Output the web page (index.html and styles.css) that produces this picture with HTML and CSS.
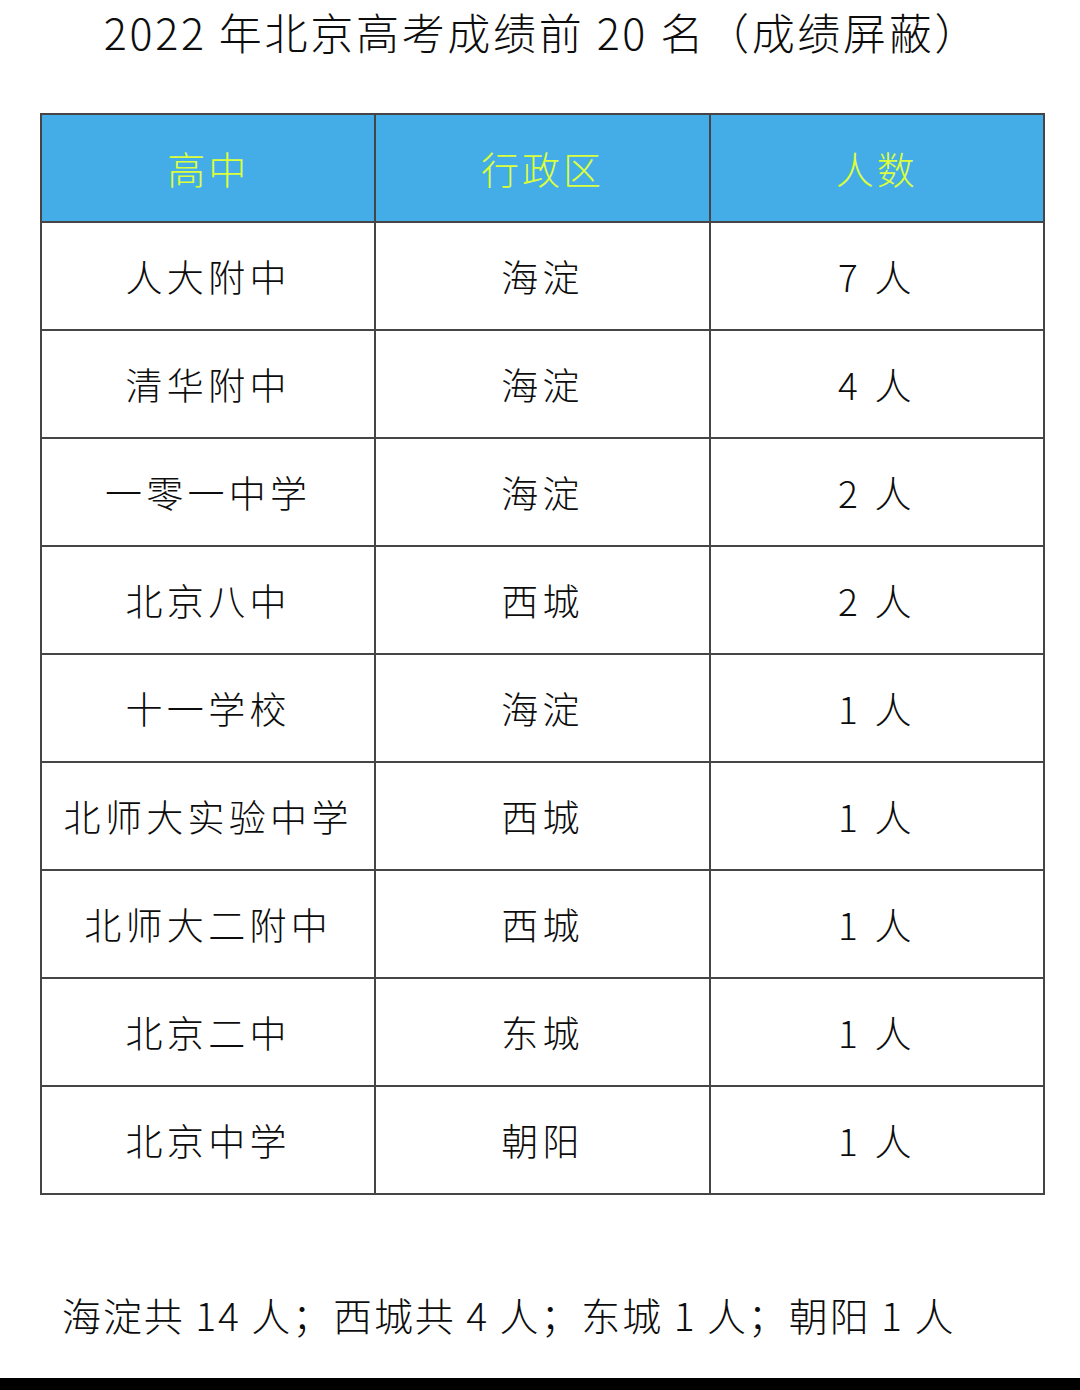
FILE: index.html
```html
<!DOCTYPE html>
<html lang="zh-CN">
<head>
<meta charset="utf-8">
<link rel="stylesheet" href="styles.css">
</head>
<body>
<div class="page">
  <h1 class="title">2022 年北京高考成绩前 20 名（成绩屏蔽）</h1>
  <table class="rank">
    <thead>
      <tr><th>高中</th><th>行政区</th><th>人数</th></tr>
    </thead>
    <tbody>
      <tr><td>人大附中</td><td>海淀</td><td>7 人</td></tr>
      <tr><td>清华附中</td><td>海淀</td><td>4 人</td></tr>
      <tr><td>一零一中学</td><td>海淀</td><td>2 人</td></tr>
      <tr><td>北京八中</td><td>西城</td><td>2 人</td></tr>
      <tr><td>十一学校</td><td>海淀</td><td>1 人</td></tr>
      <tr><td>北师大实验中学</td><td>西城</td><td>1 人</td></tr>
      <tr><td>北师大二附中</td><td>西城</td><td>1 人</td></tr>
      <tr><td>北京二中</td><td>东城</td><td>1 人</td></tr>
      <tr><td>北京中学</td><td>朝阳</td><td>1 人</td></tr>
    </tbody>
  </table>
  <p class="summary">海淀共 14 人；西城共 4 人；东城 1 人；朝阳 1 人</p>
  <div class="bottom-bar"></div>
</div>
</body>
</html>
```

FILE: styles.css
```css
html, body {
  margin: 0;
  padding: 0;
  background: #ffffff;
}

.page {
  width: 1080px;
  height: 1390px;
  display: flex;
  flex-direction: column;
  font-family: "Noto Sans CJK SC", "Noto Sans", sans-serif;
  font-weight: 300;
  color: #0d0d0d;
  overflow: hidden;
}

.title {
  margin: 0;
  height: 62px;
  display: flex;
  align-items: center;
  justify-content: center;
  padding-left: 4px;
  font-size: 43px;
  font-weight: 300;
  line-height: 1;
  letter-spacing: 2.7px;
  color: #0d0d0d;
}

.rank {
  margin: 51px 0 0 40px;
  width: 1005px;
  border-collapse: collapse;
  table-layout: fixed;
}

.rank th,
.rank td {
  border: 2px solid #454545;
  text-align: center;
  vertical-align: middle;
  padding: 0;
  font-weight: 300;
  line-height: 1;
}

.rank th {
  height: 106px;
  background: #44ade8;
  color: #dcff3c;
  font-size: 38px;
  letter-spacing: 3px;
}

.rank td {
  height: 106px;
  font-size: 37px;
  letter-spacing: 4.3px;
  color: #0d0d0d;
}

.summary {
  margin: 100px 0 0 62px;
  font-size: 39px;
  line-height: 1;
  letter-spacing: 1.9px;
  color: #0d0d0d;
}

.bottom-bar {
  margin-top: auto;
  height: 12px;
  background: #000000;
}
```
